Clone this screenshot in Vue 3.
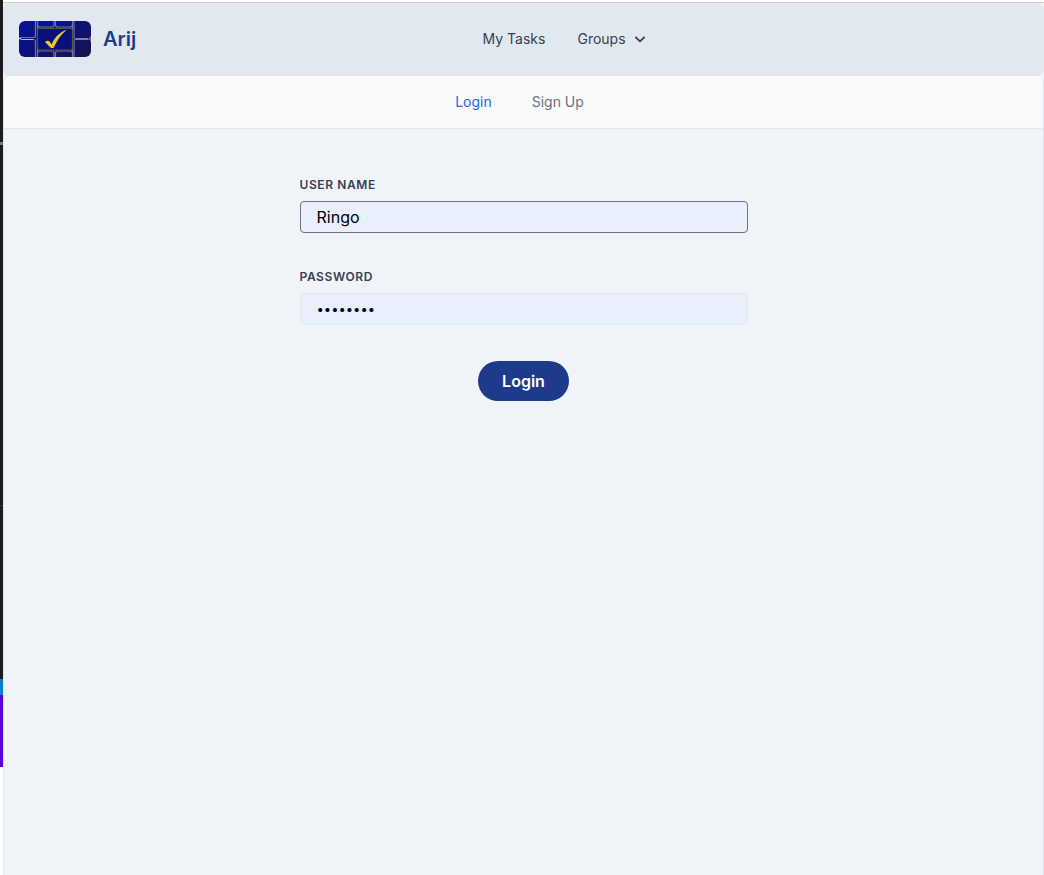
<script setup>
import { ref } from 'vue'

const username = ref('Ringo')
const password = ref('password')
</script>

<template>
  <div class="page">
    <div class="edge" aria-hidden="true">
      <div class="edge-dark"></div>
      <div class="edge-blue"></div>
      <div class="edge-purple"></div>
    </div>
    <div class="app">
      <header class="header">
        <a class="brand" href="#">
          <svg class="logo" viewBox="0 0 72 36" aria-hidden="true">
            <defs>
              <linearGradient id="night" x1="0" y1="0" x2="1" y2="1">
                <stop offset="0" stop-color="#06149b" />
                <stop offset="0.5" stop-color="#0a1277" />
                <stop offset="1" stop-color="#1b1346" />
              </linearGradient>
            </defs>
            <rect width="72" height="36" rx="6" fill="url(#night)" />
            <g fill="none" stroke="#6a74ae" stroke-width="1.2">
              <path d="M16.5 0V14.5Q16.5 16.5 14.5 16.5H2L0 17.5" />
              <path d="M0 17.5L2 18.5H14.5Q16.5 18.5 16.5 20.5V36" />
              <path d="M18.5 0V36M53.5 0V36" />
              <path d="M18.5 4Q18.5 6 20.5 6H33Q35 6 35 4V0M36.5 0V4Q36.5 6 38.5 6H51Q53.5 6 53.5 4" />
              <path d="M18.5 32Q18.5 30 20.5 30H33Q35 30 35 32V36M36.5 36V32Q36.5 30 38.5 30H51Q53.5 30 53.5 32" />
              <path d="M55 0V15.5Q55 18 57.5 18H69.5Q72 18 72 15M55 36V20.5Q55 18 57.5 18M69.5 18Q72 18 72 21" />
            </g>
            <path d="M0 17.5H2L3 18.5H14M57 18H69" fill="none" stroke="#b9bddb" stroke-width="1" />
            <rect x="18.5" y="7.5" width="35" height="21.5" rx="2" fill="#0a107b" stroke="#55563f" stroke-width="1.2" />
            <path d="M26 21Q29 18.5 31 21L32.5 23.5Q37 13 46.5 9L47 9.5Q40 15 34.5 27H32Z" fill="#efc72f" />
          </svg>
          <span class="brand-name">Arij</span>
        </a>
        <nav class="main-nav" aria-label="Main">
          <a href="#">My Tasks</a>
          <button type="button" class="groups">
            Groups
            <svg class="chevron" viewBox="0 0 16 16" aria-hidden="true">
              <path d="M3.5 6L8 10.3L12.5 6" fill="none" stroke="currentColor" stroke-width="1.8" />
            </svg>
          </button>
        </nav>
        <div class="account"></div>
      </header>
      <section class="card">
        <nav class="tabs" aria-label="Account">
          <a class="active" href="#">Login</a>
          <a href="#">Sign Up</a>
        </nav>
        <form class="form" @submit.prevent>
          <label for="username">User name</label>
          <input id="username" v-model="username" class="focused" type="text" autocomplete="off" />
          <label for="password">Password</label>
          <input id="password" v-model="password" type="password" autocomplete="off" />
          <button type="submit" class="submit">Login</button>
        </form>
      </section>
    </div>
  </div>
</template>

<style>
body {
  margin: 0;
}
</style>

<style scoped>
.page {
  box-sizing: border-box;
  display: flex;
  min-height: 100vh;
  background: #fff;
  font-family: Inter, "Liberation Sans", sans-serif;
}
.edge {
  flex: 0 0 3px;
}
.edge-dark {
  height: 679px;
  background: linear-gradient(#1c1c1e 142px, #77777a 142px, #77777a 145px, #1c1c1e 145px, #1c1c1e 505px, #38383a 505px, #38383a 506px, #1c1c1e 506px);
}
.edge-blue {
  height: 16px;
  background: #087fcf;
}
.edge-purple {
  height: 72px;
  background: #5900d6;
}
.app {
  flex: 1;
  display: flex;
  flex-direction: column;
  margin-top: 2px;
  border-top: 1px solid #c9cbce;
  background: #f0f4f9;
}
.header {
  display: flex;
  align-items: center;
  justify-content: space-between;
  padding: 18px 16px 19px;
  border-radius: 6px;
  background: #e1e8f0;
}
.brand {
  display: flex;
  align-items: center;
  gap: 12px;
  text-decoration: none;
}
.logo {
  display: block;
  width: 72px;
  height: 36px;
}
.brand-name {
  color: #1e3a8a;
  font-size: 20px;
  font-weight: 600;
  line-height: 28px;
}
.main-nav {
  display: flex;
  align-items: center;
  gap: 32px;
}
.main-nav a,
.groups {
  color: #374151;
  font: inherit;
  font-size: 14px;
  font-weight: 400;
  line-height: 20px;
  text-decoration: none;
}
.groups {
  display: flex;
  align-items: center;
  gap: 6px;
  padding: 0;
  border: 0;
  background: none;
}
.chevron {
  width: 16px;
  height: 16px;
}
.account {
  width: 34px;
}
.card {
  flex: 1;
  border: solid #e2e6ec;
  border-width: 0 1px;
  border-radius: 8px 8px 0 0;
  background: #f0f4f9;
  overflow: hidden;
}
.tabs {
  display: flex;
  justify-content: center;
  gap: 40px;
  padding: 16px 8px 16px 0;
  border-bottom: 1px solid #e2e5ea;
  background: #f9fafc;
}
.tabs a {
  color: #6b7280;
  font-size: 14px;
  font-weight: 400;
  line-height: 20px;
  text-decoration: none;
}
.tabs .active {
  color: #2563eb;
}
.form {
  display: flex;
  flex-direction: column;
  box-sizing: border-box;
  max-width: 448px;
  margin: 0 auto;
  padding-top: 48px;
}
.form label {
  margin-bottom: 8px;
  color: #374151;
  font-size: 12px;
  font-weight: 600;
  line-height: 16px;
  letter-spacing: 0.05em;
  text-transform: uppercase;
}
.form input {
  box-sizing: border-box;
  width: 100%;
  height: 32px;
  margin: 0 0 36px;
  padding: 0 16px;
  border: 1px solid #e5e7eb;
  border-radius: 4px;
  outline: none;
  background: #e8effd;
  color: #000;
  font: inherit;
  font-size: 16px;
}
.form .focused {
  border-color: #6b7280;
}
.form input[type="password"] {
  font-size: 13px;
}
.submit {
  align-self: center;
  padding: 8px 24px;
  border: 0;
  border-radius: 20px;
  background: #1e3a8a;
  color: #fff;
  font: inherit;
  font-size: 16px;
  font-weight: 600;
  line-height: 24px;
}
</style>
